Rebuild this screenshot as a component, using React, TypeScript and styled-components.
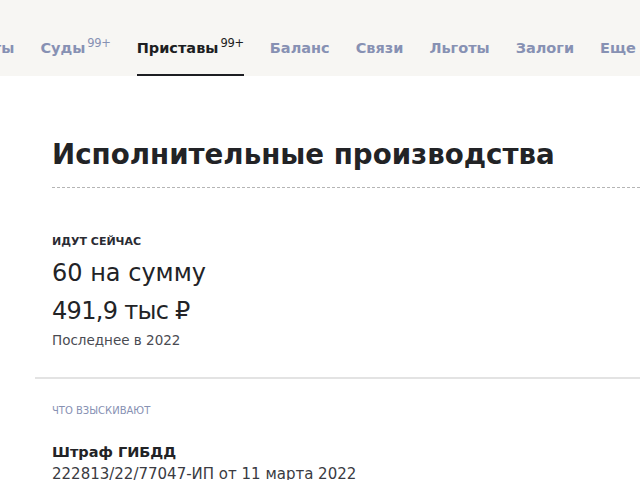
import React from "react";
import styled, { createGlobalStyle } from "styled-components";

const GlobalStyle = createGlobalStyle`
  html, body {
    margin: 0;
    padding: 0;
    background: #ffffff;
    font-family: "DejaVu Sans", "Liberation Sans", sans-serif;
    color: #222326;
    overflow: hidden;
  }
`;

const Page = styled.div`
  width: 640px;
  height: 480px;
  overflow: hidden;
`;

const TabBar = styled.nav`
  height: 76px;
  background: #f7f6f3;
  overflow: hidden;
`;

const TabRow = styled.div`
  display: flex;
  gap: 26px;
  margin-left: -67px;
  height: 100%;
  align-items: flex-end;
`;

const Tab = styled.a<{ $active?: boolean }>`
  display: flex;
  align-items: flex-start;
  padding-bottom: 18px;
  font-size: 14.5px;
  line-height: 16px;
  font-weight: 700;
  white-space: nowrap;
  color: ${(p) => (p.$active ? "#1d1e22" : "#8791b3")};
  border-bottom: 2px solid ${(p) => (p.$active ? "#1d1e22" : "transparent")};
`;

const Count = styled.span`
  font-size: 11.5px;
  line-height: 10px;
  font-weight: 400;
  margin: -2px 0 0 2px;
  letter-spacing: -0.3px;
  color: inherit;
`;

const Content = styled.main`
  padding: 59px 0 0 52px;
`;

const Title = styled.h1`
  margin: 0;
  font-size: 27.7px;
  line-height: 40px;
  font-weight: 700;
  padding-bottom: 12px;
  border-bottom: 1px dashed #b5b5b5;
`;

const Summary = styled.section`
  padding-top: 47px;
`;

const Label = styled.div`
  font-size: 11px;
  line-height: 14px;
  font-weight: 700;
  text-transform: uppercase;
  color: #2a2b33;
  margin-bottom: 5px;
`;

const BigLine = styled.div<{ $tight?: boolean }>`
  font-size: 24px;
  line-height: 38px;
  color: #222326;
  letter-spacing: ${(p) => (p.$tight ? "-0.7px" : "0")};
`;

const Note = styled.div`
  font-size: 13.5px;
  line-height: 20px;
  color: #4a4b52;
`;

const Divider = styled.hr`
  margin: 27px 0 0 35px;
  border: 0;
  border-top: 2px solid #e3e3e3;
`;

const Details = styled.section`
  padding: 25px 0 0 52px;
`;

const SmallLabel = styled.div`
  font-size: 10px;
  line-height: 14px;
  text-transform: uppercase;
  color: #8791b3;
`;

const ItemTitle = styled.div`
  margin-top: 23px;
  font-size: 14.5px;
  font-weight: 700;
  line-height: 22px;
`;

const ItemSub = styled.div`
  font-size: 15px;
  line-height: 22px;
  color: #3a3b42;
  white-space: nowrap;
`;

const tabs = [
  { name: "Контакты" },
  { name: "Суды", count: "99+" },
  { name: "Приставы", count: "99+", active: true },
  { name: "Баланс" },
  { name: "Связи" },
  { name: "Льготы" },
  { name: "Залоги" },
  { name: "Еще" },
];

export default function App() {
  return (
    <Page>
      <GlobalStyle />
      <TabBar>
        <TabRow>
          {tabs.map((t) => (
            <Tab key={t.name} $active={t.active}>
              {t.name}
              {t.count && <Count>{t.count}</Count>}
            </Tab>
          ))}
        </TabRow>
      </TabBar>
      <Content>
        <Title>Исполнительные производства</Title>
        <Summary>
          <Label>Идут сейчас</Label>
          <BigLine>60 на сумму</BigLine>
          <BigLine $tight>491,9 тыс ₽</BigLine>
          <Note>Последнее в 2022</Note>
        </Summary>
      </Content>
      <Divider />
      <Details>
        <SmallLabel>Что взыскивают</SmallLabel>
        <ItemTitle>Штраф ГИБДД</ItemTitle>
        <ItemSub>222813/22/77047-ИП от 11 марта 2022</ItemSub>
      </Details>
    </Page>
  );
}
